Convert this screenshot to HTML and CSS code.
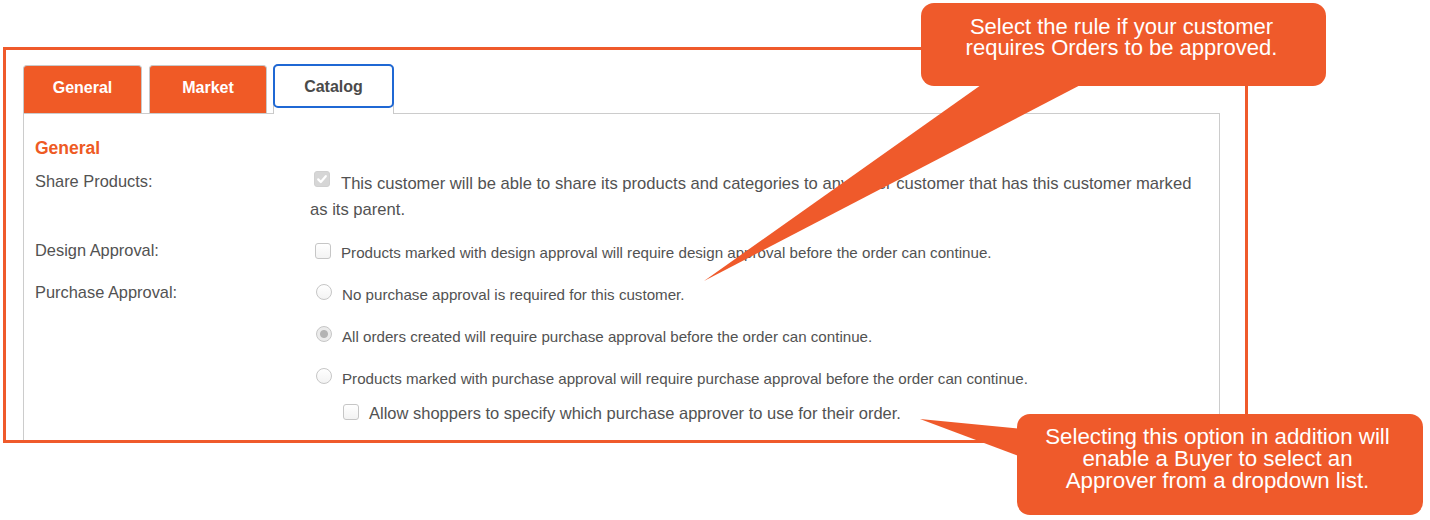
FILE: index.html
```html
<!DOCTYPE html>
<html lang="en">
<head>
    <meta charset="UTF-8">
    <title>Customer Rules - Catalog</title>
    <link rel="stylesheet" href="styles.css">
</head>
<body>
    <div class="page">
        <div class="shot">
            <ul class="tabs">
                <li class="tab"><a href="#">General</a></li>
                <li class="tab"><a href="#">Market</a></li>
                <li class="tab active"><a href="#">Catalog</a></li>
            </ul>
            <div class="panel">
                <h2 class="section-title">General</h2>

                <div class="row first">
                    <div class="label">Share Products:</div>
                    <div class="value big"><span class="box checked disabled"><svg width="12" height="12" viewBox="0 0 12 12"><path d="M2.2 6.4 L4.8 9 L9.8 3.2" fill="none" stroke="#fff" stroke-width="2.2" stroke-linecap="round" stroke-linejoin="round"/></svg></span>This customer will be able to share its products and categories to any other customer that has this customer marked as its parent.</div>
                </div>

                <div class="row">
                    <div class="label">Design Approval:</div>
                    <div class="value"><span class="box"></span>Products marked with design approval will require design approval before the order can continue.</div>
                </div>

                <div class="row">
                    <div class="label">Purchase Approval:</div>
                    <div class="value">
                        <div class="option"><span class="radio"></span>No purchase approval is required for this customer.</div>
                        <div class="option"><span class="radio selected"></span>All orders created will require purchase approval before the order can continue.</div>
                        <div class="option"><span class="radio"></span>Products marked with purchase approval will require purchase approval before the order can continue.</div>
                        <div class="option nested"><span class="box"></span>Allow shoppers to specify which purchase approver to use for their order.</div>
                    </div>
                </div>
            </div>
        </div>

        <!-- callout pointers -->
        <svg class="pointers" width="1430" height="520" viewBox="0 0 1430 520">
            <polygon points="988,80 1090,80 704,281" fill="#ef5a2b"/>
            <polygon points="920,419 1024,429 1024,458" fill="#ef5a2b"/>
        </svg>

        <div class="callout callout-top">Select the rule if your customer<br>requires Orders to be approved.</div>
        <div class="callout callout-bottom">Selecting this option in addition will<br>enable a Buyer to select an<br>Approver from a dropdown list.</div>
    </div>
</body>
</html>
```

FILE: styles.css
```css
body {
    margin: 0;
    background-color: #ffffff;
    font-family: "Liberation Sans", Arial, Helvetica, sans-serif;
    color: #525252;
}
.page {
    position: relative;
    width: 1430px;
    height: 520px;
    overflow: hidden;
}
.shot {
    margin: 47px 0 0 3px;
    width: 1245px;
    height: 396px;
    box-sizing: border-box;
    border: 3px solid #ef5a2b;
    overflow: hidden;
    background-color: #ffffff;
}

/* tabs */
.tabs {
    display: flex;
    align-items: flex-end;
    gap: 7px;
    list-style: none;
    margin: 0 0 0 17px;
    padding: 15px 0 0 0;
}
.tab {
    width: 119px;
    height: 48px;
    box-sizing: border-box;
    border: 1px solid #c9c9c9;
    border-bottom: none;
    border-radius: 4px 4px 0 0;
    background-color: #f05a26;
}
.tab:nth-child(2) {
    width: 118px;
}
.tab a {
    display: flex;
    align-items: center;
    justify-content: center;
    height: 100%;
    box-sizing: border-box;
    padding-bottom: 4px;
    color: #ffffff;
    font-weight: bold;
    font-size: 16px;
    text-decoration: none;
}
.tab.active {
    width: 121px;
    height: 49px;
    margin-left: -1px;
    margin-bottom: -1px;
    background-color: #ffffff;
}
.tab.active a {
    height: 44px;
    padding: 2px 0 0 0;
    margin: -2px -1px 0 -1px;
    border: 2px solid #1f68d4;
    border-radius: 5px;
    color: #4a4a4a;
}

/* panel */
.panel {
    margin-left: 17px;
    width: 1197px;
    height: 400px;
    box-sizing: border-box;
    border: 1px solid #cccccc;
    padding: 24px 11px 0 11px;
}
.section-title {
    margin: 0 0 13px 0;
    font-size: 17.5px;
    line-height: 20px;
    color: #ee5a24;
}
.row {
    display: grid;
    grid-template-columns: 275px 1fr;
    margin-bottom: 16px;
}
.row.first {
    margin-bottom: 17px;
}
.label {
    font-size: 16.4px;
    line-height: 20px;
}
.value {
    font-size: 15.15px;
    line-height: 26px;
}
.value.big {
    font-size: 16.6px;
}
.option {
    margin-bottom: 16px;
}
.option.nested {
    margin-top: -8px;
    padding-left: 33px;
    font-size: 16.5px;
}

/* inputs */
.box,
.radio {
    display: inline-block;
    width: 16px;
    height: 16px;
    box-sizing: border-box;
    border: 1px solid #c6c6c6;
    background: linear-gradient(#ffffff, #f3f3f3);
    margin: 0 10px 0 5px;
    vertical-align: -1px;
}
.box {
    border-radius: 3px;
}
.option.nested .box {
    margin-left: 0;
}
.value.big > .box {
    margin-left: 4px;
    margin-right: 11px;
    vertical-align: 2px;
}
.box.checked {
    background: #d6d6d6;
    border-color: #d0d0d0;
}
.box svg {
    display: block;
    margin: 1px;
}
.radio {
    border-radius: 50%;
    margin-left: 6px;
    vertical-align: 0;
}
.radio.selected {
    background: radial-gradient(circle, #b3b3b3 0, #b3b3b3 3.5px, #ebebeb 4.5px);
}

/* callouts */
.pointers {
    position: absolute;
    left: 0;
    top: 0;
    pointer-events: none;
}
.callout {
    position: absolute;
    box-sizing: border-box;
    background-color: #ef5a2b;
    border-radius: 13px;
    color: #ffffff;
    font-size: 22px;
    text-align: center;
}
.callout-top {
    left: 921px;
    top: 3px;
    width: 405px;
    height: 83px;
    padding: 13px 4px 0 0;
    line-height: 21px;
}
.callout-bottom {
    left: 1017px;
    top: 414px;
    width: 406px;
    height: 101px;
    padding: 12px 5px 0 0;
    line-height: 22px;
    font-size: 22.3px;
}
```
